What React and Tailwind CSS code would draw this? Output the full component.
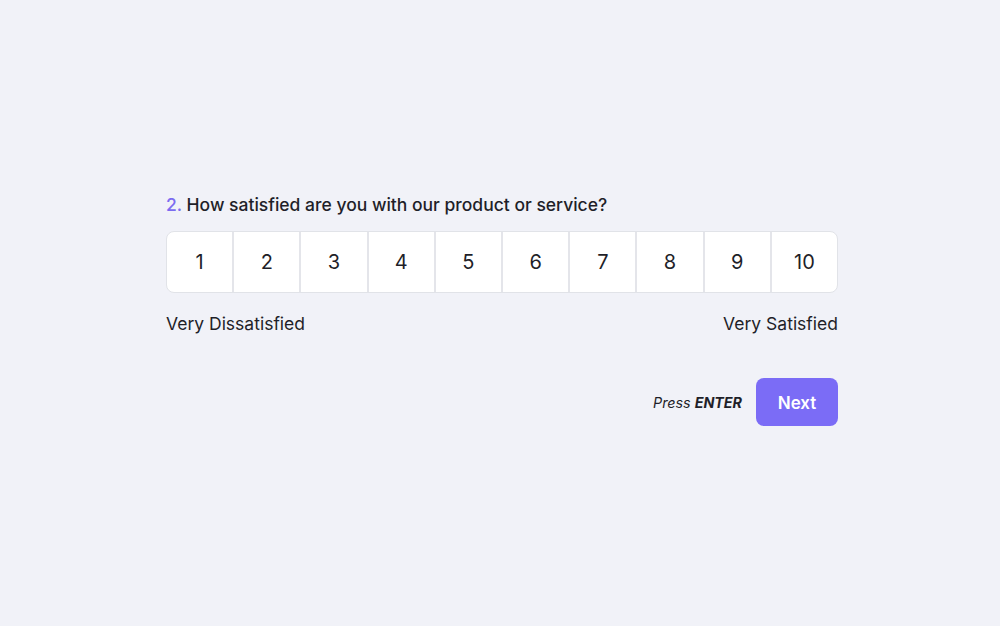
export default function App() {
  const nums = [1, 2, 3, 4, 5, 6, 7, 8, 9, 10];
  return (
    <div className="w-[1000px] h-[626px] bg-[#f1f2f8] flex justify-center" style={{ fontFamily: "Inter, 'Noto Sans', sans-serif" }}>
      <div className="w-[672px] ml-[4px] pt-[194px]">
        <div className="text-[17.5px] leading-[22px] font-medium text-[#1f1f29]">
          <span className="text-[#7c6cf0]">2.</span> How satisfied are you with our product or service?
        </div>
        <div className="mt-[15px] flex h-[62px] rounded-[8px] border border-[#e1e3e8] bg-white overflow-hidden">
          {nums.map((n, i) => (
            <div
              key={n}
              className={`flex-1 flex items-center justify-center text-[20px] text-[#1f1f29] ${i < 9 ? "border-r-2 border-[#e4e5ea]" : ""}`}
            >
              {n}
            </div>
          ))}
        </div>
        <div className="mt-[20px] flex justify-between text-[17.5px] leading-[22px] text-[#1f1f29]">
          <span>Very Dissatisfied</span>
          <span>Very Satisfied</span>
        </div>
        <div className="mt-[43px] flex justify-end items-center gap-[14px]">
          <span className="italic text-[14.3px] text-[#1f1f29] pt-[2px]">
            Press <span className="font-bold">ENTER</span>
          </span>
          <button className="w-[82px] h-[48px] rounded-[8px] bg-[#7b6cf6] text-white text-[17px] font-semibold pt-[3px]">
            Next
          </button>
        </div>
      </div>
    </div>
  );
}
